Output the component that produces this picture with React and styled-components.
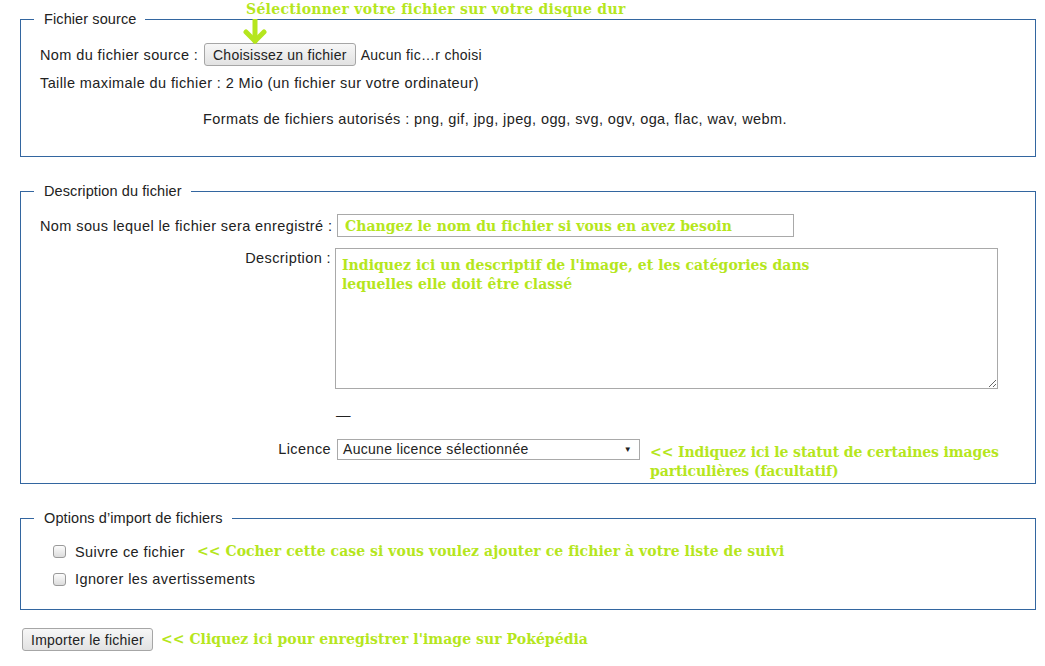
import React from "react";
import styled, { createGlobalStyle } from "styled-components";

const Global = createGlobalStyle`
  html, body { margin: 0; padding: 0; background: #fff; }
  body {
    font-family: "Liberation Sans", Arial, sans-serif;
    font-size: 14.5px;
    letter-spacing: 0.4px;
    color: #222;
  }
`;

const LIME = "#b5e61d";
const BLUE = "#3366a0";

const Page = styled.div`
  position: relative;
  display: flex;
  flex-direction: column;
  align-items: stretch;
  padding: 10px 9px 0 20px;
`;

const Fieldset = styled.fieldset`
  margin: 0 0 ${(p) => p.$mb || 25}px 0;
  padding: ${(p) => p.$pt}px 19px ${(p) => p.$pb}px 19px;
  border: 1px solid ${BLUE};
  min-width: 0;
`;

const Legend = styled.legend`
  margin-left: -6px;
  padding: 0 9px 0 10px;
  line-height: 18px;
  font-size: 14.5px;
  letter-spacing: 0.1px;
  color: #222;
`;

const Hint = styled.span`
  font-family: "DejaVu Serif", "Liberation Serif", serif;
  font-weight: bold;
  font-size: 14px;
  letter-spacing: ${(p) => p.$ls ?? 0.05}px;
  line-height: 19px;
  color: ${LIME};
  white-space: ${(p) => (p.$wrap ? "normal" : "nowrap")};
`;

const TopHint = styled.div`
  position: absolute;
  left: 246px;
  top: 0;
  display: flex;
  flex-direction: column;
  align-items: flex-start;
`;

const ArrowSvg = styled.svg`
  display: block;
  margin-left: -3px;
  margin-top: 0;
`;

const SourceGrid = styled.div`
  display: grid;
  grid-template-columns: 164px 1fr;
  align-items: center;
`;

const Label = styled.div`
  line-height: 18px;
  white-space: nowrap;
  text-align: ${(p) => (p.$right ? "right" : "left")};
  padding-right: ${(p) => (p.$right ? 6 : 0)}px;
  align-self: ${(p) => (p.$top ? "start" : "center")};
  margin-top: ${(p) => p.$mt || 0}px;
`;

const Cell = styled.div`
  display: flex;
  align-items: ${(p) => (p.$start ? "flex-start" : "center")};
  gap: ${(p) => p.$gap || 0}px;
  margin-top: ${(p) => p.$mt || 0}px;
  grid-column: ${(p) => p.$span || "auto"};
  line-height: 18px;
`;

const Button = styled.button`
  font-family: "Liberation Sans", Arial, sans-serif;
  font-size: 14px;
  letter-spacing: 0.25px;
  color: #222;
  height: 23px;
  padding: 0 8px;
  border: 1px solid #a6a6a6;
  border-radius: 3px;
  background: linear-gradient(#f7f7f7, #e2e2e2);
  line-height: 20px;
  white-space: nowrap;
  margin-left: ${(p) => p.$ml || 0}px;
`;

const FileName = styled.span`
  margin-left: 5px;
  font-size: 14px;
  letter-spacing: 0.3px;
`;

const DescGrid = styled.div`
  display: grid;
  grid-template-columns: 297px 1fr;
  align-items: start;
`;

const TextInput = styled.input`
  box-sizing: border-box;
  width: 457px;
  height: 23px;
  border: 1px solid #a9a9a9;
  padding: 0 0 0 7px;
  margin: 0;
  font-family: "DejaVu Serif", "Liberation Serif", serif;
  font-weight: bold;
  font-size: 14px;
  letter-spacing: 0.05px;
  color: ${LIME};
  outline: none;
`;

const TextArea = styled.textarea`
  box-sizing: border-box;
  width: 663px;
  height: 141px;
  margin: 0 0 0 -2px;
  border: 1px solid #a9a9a9;
  padding: 7px 6px;
  font-family: "DejaVu Serif", "Liberation Serif", serif;
  font-weight: bold;
  font-size: 14px;
  letter-spacing: 0.05px;
  line-height: 19px;
  color: ${LIME};
  outline: none;
  resize: both;
  display: block;
`;

const Dash = styled.span`
  margin-left: -1px;
`;

const SelectBox = styled.div`
  position: relative;
  box-sizing: border-box;
  width: 303px;
  height: 21px;
  flex: none;
  border: 1px solid #a9a9a9;
  background: #fff;
  padding-left: 5px;
  line-height: 19px;
  font-size: 14px;
  letter-spacing: 0.3px;
  white-space: nowrap;
`;

const Caret = styled.span`
  position: absolute;
  right: 7px;
  top: 0;
  font-size: 8px;
  line-height: 19px;
  color: #222;
`;

const LicenceHint = styled(Hint)`
  width: 370px;
  margin-top: 4px;
  letter-spacing: -0.1px;
`;

const CheckRow = styled.div`
  display: flex;
  align-items: center;
  line-height: 18px;
  margin-top: ${(p) => p.$mt || 0}px;
  padding-left: 13px;
`;

const Check = styled.span`
  box-sizing: border-box;
  width: 13px;
  height: 13px;
  border: 1px solid #9a9a9a;
  border-radius: 3px;
  background: linear-gradient(#fcfcfc, #dcdcdc);
  margin-right: 9px;
  flex: none;
`;

const CheckText = styled.span`
  margin-right: 12px;
`;

const SubmitRow = styled.div`
  display: flex;
  align-items: center;
  gap: 8px;
  margin-top: -7px;
`;

export default function App() {
  return (
    <>
      <Global />
      <Page>
        <TopHint>
          <Hint $ls={0.3}>Sélectionner votre fichier sur votre disque dur</Hint>
          <ArrowSvg width="26" height="26" viewBox="0 0 26 26">
            <line x1="12" y1="1" x2="12" y2="22" stroke={LIME} strokeWidth="5" strokeLinecap="round" />
            <polyline points="3,13 12,22 21,13" fill="none" stroke={LIME} strokeWidth="5" strokeLinecap="round" strokeLinejoin="round" />
          </ArrowSvg>
        </TopHint>

        <Fieldset $pt={15} $pb={28}>
          <Legend>Fichier source</Legend>
          <SourceGrid>
            <Label>Nom du fichier source :</Label>
            <Cell>
              <Button type="button">Choisissez un fichier</Button>
              <FileName>Aucun fic…r choisi</FileName>
            </Cell>
            <Cell $span="1 / 3" $mt={8}>
              Taille maximale du fichier : 2 Mio (un fichier sur votre ordinateur)
            </Cell>
            <Cell $span="2 / 3" $mt={18}>
              <Dash>Formats de fichiers autorisés : png, gif, jpg, jpeg, ogg, svg, ogv, oga, flac, wav, webm.</Dash>
            </Cell>
          </SourceGrid>
        </Fieldset>

        <Fieldset $pt={14} $pb={2}>
          <Legend>Description du fichier</Legend>
          <DescGrid>
            <Label $right $top $mt={3}>Nom sous lequel le fichier sera enregistré :</Label>
            <Cell>
              <TextInput readOnly value="Changez le nom du fichier si vous en avez besoin" />
            </Cell>

            <Label $right $top $mt={12}>Description :</Label>
            <Cell $mt={11}>
              <TextArea
                readOnly
                defaultValue={"Indiquez ici un descriptif de l'image, et les catégories dans\nlequelles elle doit être classé"}
              />
            </Cell>

            <div />
            <Cell $mt={17}>
              <Dash>—</Dash>
            </Cell>

            <Label $right $top $mt={16}>Licence</Label>
            <Cell $start $gap={10} $mt={15}>
              <SelectBox>
                Aucune licence sélectionnée
                <Caret>▼</Caret>
              </SelectBox>
              <LicenceHint $wrap>
                &lt;&lt; Indiquez ici le statut de certaines images particulières (facultatif)
              </LicenceHint>
            </Cell>
          </DescGrid>
        </Fieldset>

        <Fieldset $pt={15} $pb={21} $mb={25}>
          <Legend>Options d’import de fichiers</Legend>
          <CheckRow>
            <Check />
            <CheckText>Suivre ce fichier</CheckText>
            <Hint>&lt;&lt; Cocher cette case si vous voulez ajouter ce fichier à votre liste de suivi</Hint>
          </CheckRow>
          <CheckRow $mt={9}>
            <Check />
            <CheckText>Ignorer les avertissements</CheckText>
          </CheckRow>
        </Fieldset>

        <SubmitRow>
          <Button type="button" $ml={2}>Importer le fichier</Button>
          <Hint>&lt;&lt; Cliquez ici pour enregistrer l'image sur Poképédia</Hint>
        </SubmitRow>
      </Page>
    </>
  );
}
